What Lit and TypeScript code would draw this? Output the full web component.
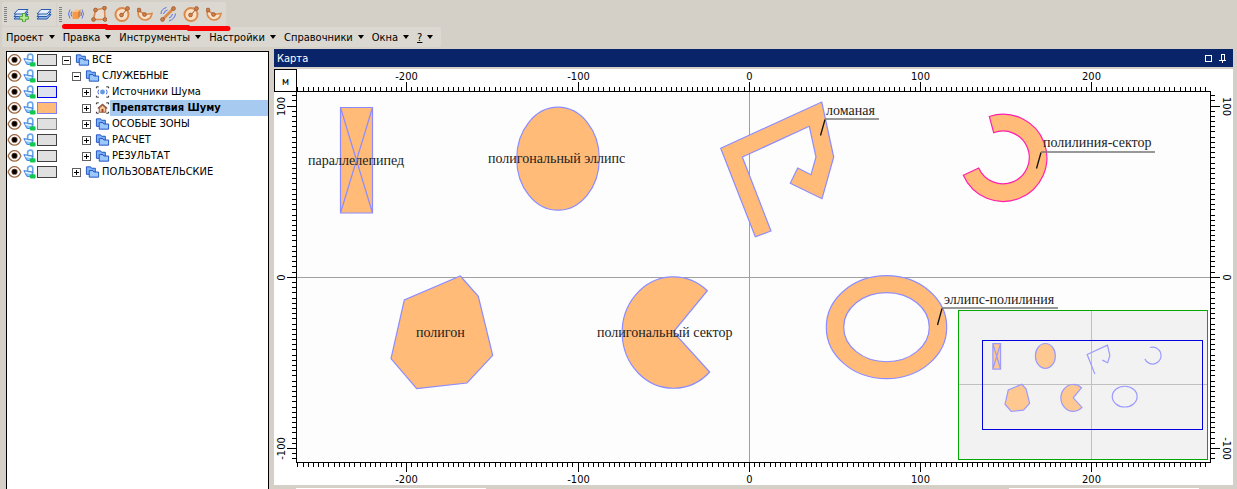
import { LitElement, html, svg, css } from "lit";
import { customElement, state } from "lit/decorators.js";
import { classMap } from "lit/directives/class-map.js";

const MAJOR = 171.25;
const MINOR = MAJOR / 33;

const dot = (x: number, y: number) =>
  svg`<circle cx=${x} cy=${y} r="1.9" fill="#cf8048" stroke="#94502a" stroke-width=".7" />`;

const sheets = svg`
  <path d="M5 8.500h10l-4 4.500H1z" fill="#8fb4ea" stroke="#2a5cab" />
  <path d="M5 6h10l-4 4.500H1z" fill="#cfe0fa" stroke="#2a5cab" />
  <path d="M5 3.500h10l-4 4.500H1z" fill="#e4eefc" stroke="#2a5cab" />`;

const drawIcon: Record<string, unknown> = {
  layerAdd: svg`${sheets}<path d="M9.500 7.500h3v2.800h2.800v3h-2.800v2.500h-3v-2.500H6.700v-3h2.800z" fill="#b4ec8c" stroke="#4fa03a" />`,
  layers: sheets,
  box: svg`
    <path d="M4.500 6l3-2.500h5l-2.500 2.500z" fill="#ffbf80" />
    <path d="M4.500 6H10v7H4.500z" fill="#f49a48" /><path d="M10 6l2.500-2.500v6.500L10 13z" fill="#dd8232" />
    <path d="M2 3.500Q-1 8 2 12.500M3.800 5.500Q2 8 3.800 10.500M14 3.500Q17 8 14 12.500M13 6Q14 8 13 10" fill="none" stroke="#5a72e0" />`,
  polygon: svg`
    <path d="M4.500 4L13.500 2L14 13.500H2.500z" fill="#e9ddd2" stroke="#d98a4c" stroke-width="1.600" />
    ${dot(4.5, 4)}${dot(13.5, 2)}${dot(14, 13.5)}${dot(2.5, 13.5)}`,
  circle: svg`
    <circle cx="8" cy="8.500" r="6.500" fill="#fbe0c4" stroke="#d98a4c" stroke-width="2" />
    <path d="M8 9L13 3" stroke="#94502a" />${dot(7.5, 9)}${dot(13.5, 2.5)}`,
  sector: svg`
    <path d="M1.500 4.500L8 8.500L15 7.500C14 13 10 14 7.500 14C4 14 0 10 1.500 4.500z" fill="#fbe0c4" stroke="#d98a4c" stroke-width="1.600" />
    ${dot(2, 4)}${dot(7.5, 8.5)}`,
  line: svg`
    <path d="M2.500 13.500L13.500 2.500" stroke="#d98a4c" stroke-width="2.600" />
    ${dot(2.5, 13.5)}${dot(13.5, 2.5)}
    <path d="M1 8Q1 3 6.500 1.500M3.500 8Q4 5 7.500 4M9 15Q15 13 15.500 7.500M9 12Q12 11 12.500 8" fill="none" stroke="#5a72e0" />`,
  eye: svg`
    <path d="M1.200 8Q3.500 2.200 8 2.200Q12.500 2.200 14.800 8Q12.500 13.500 8 13.500Q3.500 13.500 1.200 8z" fill="#fff" stroke="#9a6a48" stroke-width="1.400" />
    <circle cx="8" cy="7.700" r="3.300" fill="#6a4028" /><circle cx="8" cy="7.700" r="2.500" fill="#000" />`,
  lock: svg`
    <path d="M6 7V4Q6.500 1.800 9 1.800Q11.500 1.800 11.500 4V9" fill="none" stroke="#6ba6ec" stroke-width="1.800" />
    <path d="M2 6.500L11.500 8V13.500L5 12.500z" fill="#8cc0f6" stroke="#3c7cd8" /><path d="M3.500 8.300L10 9.700" stroke="#e8f4ff" stroke-width="1.500" />
    <rect x="8.500" y="10.500" width="6" height="4.500" rx="1.500" fill="#10c850" />`,
  folder: svg`
    <path d="M1.500 10.500V2.500H6L7 4H11V10.500z" fill="#7fb2f4" stroke="#1c50c0" />
    <path d="M4.500 13.500V6.500H8.500L9.500 8H14.500V13.500z" fill="#9cc8fa" stroke="#1c50c0" />`,
  source: svg`
    <path d="M1.500 4V2.500H4M12 2.500H14.500V4M14.500 12V13.500H12M4 13.500H1.500V12" fill="none" stroke="#222" />
    <circle cx="8" cy="8" r="2.600" fill="#5f9be0" /><path d="M4 5.500Q2 8 4 10.500M12 5.500Q14 8 12 10.500" fill="none" stroke="#4a62d8" />`,
  house: svg`
    <path d="M1.500 4V2.500H4M12 2.500H14.500V4M14.500 12V13.500H12M4 13.500H1.500V12" fill="none" stroke="#222" />
    <path d="M4.500 8V12.500H11.500V8L8 5z" fill="#f4c8a0" stroke="#8a5038" /><path d="M3 8.500L8 4L13 8.500" fill="none" stroke="#8a5038" stroke-width="1.300" />
    <rect x="7" y="9" width="2" height="3.500" fill="#a04828" />`,
};

const icon = (name: string) =>
  html`<svg class="icon" viewBox="0 0 16 16" aria-hidden="true">${drawIcon[name]}</svg>`;

const menus = ["Проект", "Правка", "Инструменты", "Настройки", "Справочники", "Окна", "?"];

const tools: [string, string][] = [
  ["box", "Параллелепипед"],
  ["polygon", "Полигон"],
  ["circle", "Полигональный эллипс"],
  ["sector", "Полигональный сектор"],
  ["line", "Ломаная"],
  ["circle", "Эллипс-полилиния"],
  ["sector", "Полилиния-сектор"],
];

interface Layer {
  name: string;
  level: number;
  open?: boolean;
  glyph: string;
  swatch: string;
}

const layers: Layer[] = [
  { name: "ВСЕ", level: 0, open: true, glyph: "folder", swatch: "dark" },
  { name: "СЛУЖЕБНЫЕ", level: 1, open: true, glyph: "folder", swatch: "dark" },
  { name: "Источники Шума", level: 2, glyph: "source", swatch: "blue" },
  { name: "Препятствия Шуму", level: 2, glyph: "house", swatch: "orange" },
  { name: "ОСОБЫЕ ЗОНЫ", level: 2, glyph: "folder", swatch: "gray" },
  { name: "РАСЧЕТ", level: 2, glyph: "folder", swatch: "dark" },
  { name: "РЕЗУЛЬТАТ", level: 2, glyph: "folder", swatch: "dark" },
  { name: "ПОЛЬЗОВАТЕЛЬСКИЕ", level: 1, glyph: "folder", swatch: "dark" },
];

// Map features; the axes cross at (749, 277).
const solids = svg`
  <path d="M340.500 107.500H372.500V213H340.500zL372.500 213M372.500 107.500L340.500 213" />
  <ellipse cx="558" cy="158.700" rx="41.300" ry="51.500" />
  <path d="M460.300 276L478.300 296.300L492.700 355.300L467 383L416.700 388.700L391 358.700L404.300 300z" />
  <path d="M707.300 290.700A51.300 55.700 0 1 0 709.700 372L673.300 332z" />`;

@customElement("map-ruler")
export class MapRuler extends LitElement {
  static properties = { side: { type: String }, origin: { type: Number } };
  declare side: string;
  declare origin: number;

  @state() private extent = 0;
  private observer = new ResizeObserver(() => this.measure());

  static styles = css`
    :host { display: block; min-width: 0; min-height: 0; overflow: hidden; }
    svg { display: block; width: 100%; height: 100%; }
    path { stroke: #000; fill: none; shape-rendering: crispEdges; }
    text { font: 11px "DejaVu Sans Condensed", "DejaVu Sans", sans-serif; text-anchor: middle; fill: #000; }
  `;

  connectedCallback() {
    super.connectedCallback();
    this.observer.observe(this);
  }

  disconnectedCallback() {
    this.observer.disconnect();
    super.disconnectedCallback();
  }

  firstUpdated() {
    this.measure();
  }

  private get vertical() {
    return this.side === "left" || this.side === "right";
  }

  private measure() {
    this.extent = this.vertical ? this.clientHeight : this.clientWidth;
  }

  render() {
    const vertical = this.vertical;
    const inner = this.side === "left" || this.side === "top" ? 22 : 0;
    const dir = inner ? -1 : 1;
    const first = Math.ceil(-this.origin / MINOR);
    const last = Math.floor((this.extent - this.origin - 3) / MINOR);
    let d = "";
    const labels: unknown[] = [];
    for (let i = first; i <= last; i++) {
      const p = Math.round(this.origin + i * MINOR - 0.2) + 0.5;
      const end = inner + dir * (i % 33 === 0 ? 9 : 4);
      d += vertical ? `M${inner} ${p}H${end}` : `M${p} ${inner}V${end}`;
      if (i % 33 === 0) {
        const value = (i / 33) * (vertical ? -100 : 100) || 0;
        if (!vertical) {
          labels.push(svg`<text x=${p} y=${inner ? 11 : 20}>${value}</text>`);
        } else {
          const turn = inner ? -90 : 90;
          labels.push(svg`<text transform=${`translate(${inner ? 11 : 12} ${p}) rotate(${turn})`}>${value}</text>`);
        }
      }
    }
    return html`<svg aria-hidden="true"><path d=${d} />${labels}</svg>`;
  }
}

@customElement("layer-tree")
export class LayerTree extends LitElement {
  @state() private selected = 3;

  static styles = css`
    :host { display: block; background: #fff; border: 1px solid #000; border-bottom: 0; overflow: hidden; }
    ul { list-style: none; margin: 0; padding: 0; }
    li { display: flex; align-items: center; height: 16px; }
    button { font: inherit; color: inherit; background: none; border: 0; padding: 0; margin: 0; }
    .icon { display: block; width: 15px; height: 16px; }
    .swatch { box-sizing: border-box; width: 20px; height: 12px; margin: 0 5px 0 0; border: 1px solid #404040; background: #e0e0e0; }
    .blue { border-color: #0000f0; background: #dde2ee; }
    .orange { border-color: #8080ff; background: #ffbb77; }
    .gray { border-color: #808080; }
    .l1 { padding-left: 10px; }
    .l2 { padding-left: 20px; }
    .branch { display: flex; align-items: center; flex: 1; min-width: 0; }
    .toggle { width: 9px; height: 9px; flex: none; margin-right: 4px; }
    .toggle svg { display: block; width: 9px; height: 9px; shape-rendering: crispEdges; }
    .label { flex: 1; height: 16px; line-height: 16px; padding-left: 2px; text-align: left; white-space: nowrap; }
    .selected { background: #a6caf0; font-weight: bold; }
  `;

  render() {
    return html`<ul>
      ${layers.map((l, i) => html`<li>
        <button aria-label="Видимость">${icon("eye")}</button>
        <button aria-label="Блокировка">${icon("lock")}</button>
        <button class="swatch ${l.swatch}" aria-label="Цвет"></button>
        <div class="branch l${l.level}">
          <button class="toggle" aria-label=${l.open ? "Свернуть" : "Развернуть"}>
            <svg viewBox="0 0 9 9"><rect x=".5" y=".5" width="8" height="8" fill="#fff" stroke="#606060" />
              <path d=${l.open ? "M2 4.500H7" : "M2 4.500H7M4.500 2V7"} stroke="#000" /></svg>
          </button>
          ${icon(l.glyph)}
          <button class=${classMap({ label: true, selected: i === this.selected })}
            @click=${() => (this.selected = i)}>${l.name}</button>
        </div>
      </li>`)}
    </ul>`;
  }
}

@customElement("map-view")
export class MapView extends LitElement {
  static styles = css`
    :host { display: grid; grid-template-columns: 22px minmax(0, 1fr) 22px; grid-template-rows: 22px minmax(0, 1fr) 22px; background: #fff; }
    .unit { box-sizing: border-box; width: 23px; height: 23px; border: 1px solid #000; display: grid; place-items: center; padding-top: 2px; z-index: 1; font: 10px "DejaVu Sans Mono", monospace; }
    .top, .bottom { grid-column: 2; }
    .bottom { grid-row: 3; }
    .plot { position: relative; border: 1px solid #000; overflow: hidden; background: #fdfdfd; }
    .plot > svg { display: block; width: 100%; height: 100%; }
    .axis { stroke: #a0a0a0; shape-rendering: crispEdges; }
    .shape { fill: #ffbb77; stroke: #8c8cff; stroke-width: 1.200; }
    .picked { stroke: #ff20b0; }
    .leader { fill: none; stroke: #111; stroke-width: 1.300; }
    .shelf { stroke: #777; stroke-width: 1.500; }
    text { font: 14px "Liberation Serif", serif; fill: #222; }
    .overview { position: absolute; right: 2px; bottom: 2px; width: 250px; height: 150px; }
    .overview svg { display: block; }
    .mini { fill: #ffc890; stroke: #9a9aff; stroke-width: 1.200; }
    .mini > * { vector-effect: non-scaling-stroke; }
    .mini .hole { fill: none; }
  `;

  render() {
    return html`
      <div class="unit">м</div>
      <map-ruler class="top" side="top" .origin=${453}></map-ruler>
      <span></span>
      <map-ruler side="left" .origin=${186}></map-ruler>
      <div class="plot">
        <svg role="img" aria-label="Карта">
          <g transform="translate(-297 -92)">
            <path class="axis" d="M749.500 0V3000M0 277.500H5000" />
            <g class="shape">
              ${solids}
              <path d="M821.700 102L833.700 157L822 198.700L790.300 183.300L797.700 168L811 174.700L816 157L809.300 126.300L742.300 157L771 231L755.300 236.700L720.700 148.300z" />
              <path fill-rule="evenodd" d="M826.300 327.200a60.200 51.500 0 1 0 120.400 0a60.200 51.500 0 1 0 -120.400 0zM843.700 327.200a42.800 34.500 0 1 0 85.600 0a42.800 34.500 0 1 0 -85.600 0z" />
              <path class="picked" d="M989.300 116.500A43.600 43.600 0 1 1 963.300 175.300L978.700 168A26.400 26.400 0 1 0 993.700 132.700z" />
            </g>
            <g class="leader">
              <path d="M820.500 135.500L825 119.500M1036.500 168.500L1041 152.500M937.500 325L942 308.500" />
              <path class="shelf" d="M825 119H879M1041 152H1155M942 308H1058" />
            </g>
            <text x="308" y="165">параллелепипед</text>
            <text x="488" y="163">полигональный эллипс</text>
            <text x="826" y="115">ломаная</text>
            <text x="1043" y="147">полилиния-сектор</text>
            <text x="416" y="337">полигон</text>
            <text x="597" y="337">полигональный сектор</text>
            <text x="944" y="304">эллипс-полилиния</text>
          </g>
        </svg>
        <div class="overview">
          <svg width="250" height="150" aria-hidden="true">
            <rect x=".5" y=".5" width="249" height="149" fill="#f2f2f2" stroke="#00a800" />
            <path d="M133.500 1V149M1 74.500H249" stroke="#c0c0c0" />
            <g class="mini" transform="translate(133.500 74.500) scale(.2415) translate(-749 -277)">
              ${solids}
              <path class="hole" d="M763 234L731 153L815 114L825 157L816 187L794 176" />
              <path class="hole" d="M991 124A35 35 0 1 1 970 171" />
              <ellipse class="hole" cx="886.500" cy="327.200" rx="51.500" ry="43" />
            </g>
            <rect x="24.500" y="30.500" width="220" height="89" fill="none" stroke="#0000e0" />
          </svg>
        </div>
      </div>
      <map-ruler side="right" .origin=${186}></map-ruler>
      <map-ruler class="bottom" side="bottom" .origin=${453}></map-ruler>
    `;
  }
}

@customElement("app-root")
export class AppRoot extends LitElement {
  static styles = css`
    :host { display: flex; flex-direction: column; box-sizing: border-box; height: 100vh; padding-top: 2px; overflow: hidden; background: #d4d0c8; color: #000; font: 11px "DejaVu Sans Condensed", "DejaVu Sans", sans-serif; }
    button { font: inherit; color: inherit; background: none; border: 0; padding: 0; margin: 0; }
    .bars { display: flex; gap: 1px; padding-left: 2px; height: 24px; margin-bottom: 1px; }
    .bar { display: flex; align-items: center; background: #dbd8d1; padding: 0 1px 0 2px; border-radius: 2px; position: relative; }
    .grip { width: 3px; height: 15px; margin-right: 2px; background: repeating-linear-gradient(#808080 0 1px, #dbd8d1 1px 2px); }
    .tool { width: 23px; height: 22px; display: grid; place-items: center; }
    .icon { display: block; width: 16px; height: 16px; }
    .marker { position: absolute; left: 3px; top: 20px; width: 174px; height: 10px; z-index: 1; pointer-events: none; }
    .menu { display: flex; align-self: flex-start; margin-left: 2px; padding-left: 4px; background: #dbd8d1; height: 20px; border-radius: 2px; }
    .menu button { display: flex; align-items: center; gap: 5px; padding-right: 8px; }
    .menu button::after { content: ""; border: 3px solid transparent; border-top: 4px solid #000; border-bottom: 0; }
    .help { text-decoration: underline; }
    main { flex: 1; min-height: 0; display: flex; gap: 5px; padding: 2px 4px 0 6px; }
    layer-tree { width: 261px; flex: none; margin-top: 2px; }
    section { flex: 1; min-width: 0; display: flex; flex-direction: column; }
    header { display: flex; align-items: center; gap: 7px; height: 18px; padding: 0 6px 0 3px; background: #0a246a; color: #fff; margin-bottom: 2px; }
    h1 { flex: 1; margin: 0; font: inherit; }
    header svg { display: block; width: 8px; height: 9px; shape-rendering: crispEdges; }
    map-view { flex: 1; min-height: 0; }
    footer { display: flex; justify-content: space-between; height: 1px; margin-top: 3px; padding: 0 34px 0 22px; }
    .field { width: 21%; background: #fff; }
  `;

  render() {
    return html`
      <div class="bars">
        <div class="bar" role="toolbar">
          <span class="grip"></span>
          <button class="tool" aria-label="Добавить слой">${icon("layerAdd")}</button>
          <button class="tool" aria-label="Слои">${icon("layers")}</button>
        </div>
        <div class="bar" role="toolbar">
          <span class="grip"></span>
          ${tools.map(([name, label]) => html`<button class="tool" aria-label=${label}>${icon(name)}</button>`)}
          <svg class="marker" aria-hidden="true">
            <path d="M4.500 4.500H46L47 5.500H128L129 6.500H168" fill="none" stroke="#f00" stroke-width="5" stroke-linecap="round" />
          </svg>
        </div>
      </div>
      <nav class="menu">
        ${menus.map((m) => html`<button><span class=${classMap({ help: m === "?" })}>${m}</span></button>`)}
      </nav>
      <main>
        <layer-tree></layer-tree>
        <section>
          <header>
            <h1>Карта</h1>
            <button aria-label="Развернуть"><svg viewBox="0 0 8 9"><rect x="1.500" y="1.500" width="6" height="6" fill="none" stroke="#fff" /></svg></button>
            <button aria-label="Закрепить"><svg viewBox="0 0 8 9"><path d="M2.500 6V.5H5.500V6M5 0V6M0 6.500H7M3.500 6V9" fill="none" stroke="#fff" /></svg></button>
          </header>
          <map-view></map-view>
          <footer><span class="field"></span><span class="field"></span></footer>
        </section>
      </main>
    `;
  }
}
